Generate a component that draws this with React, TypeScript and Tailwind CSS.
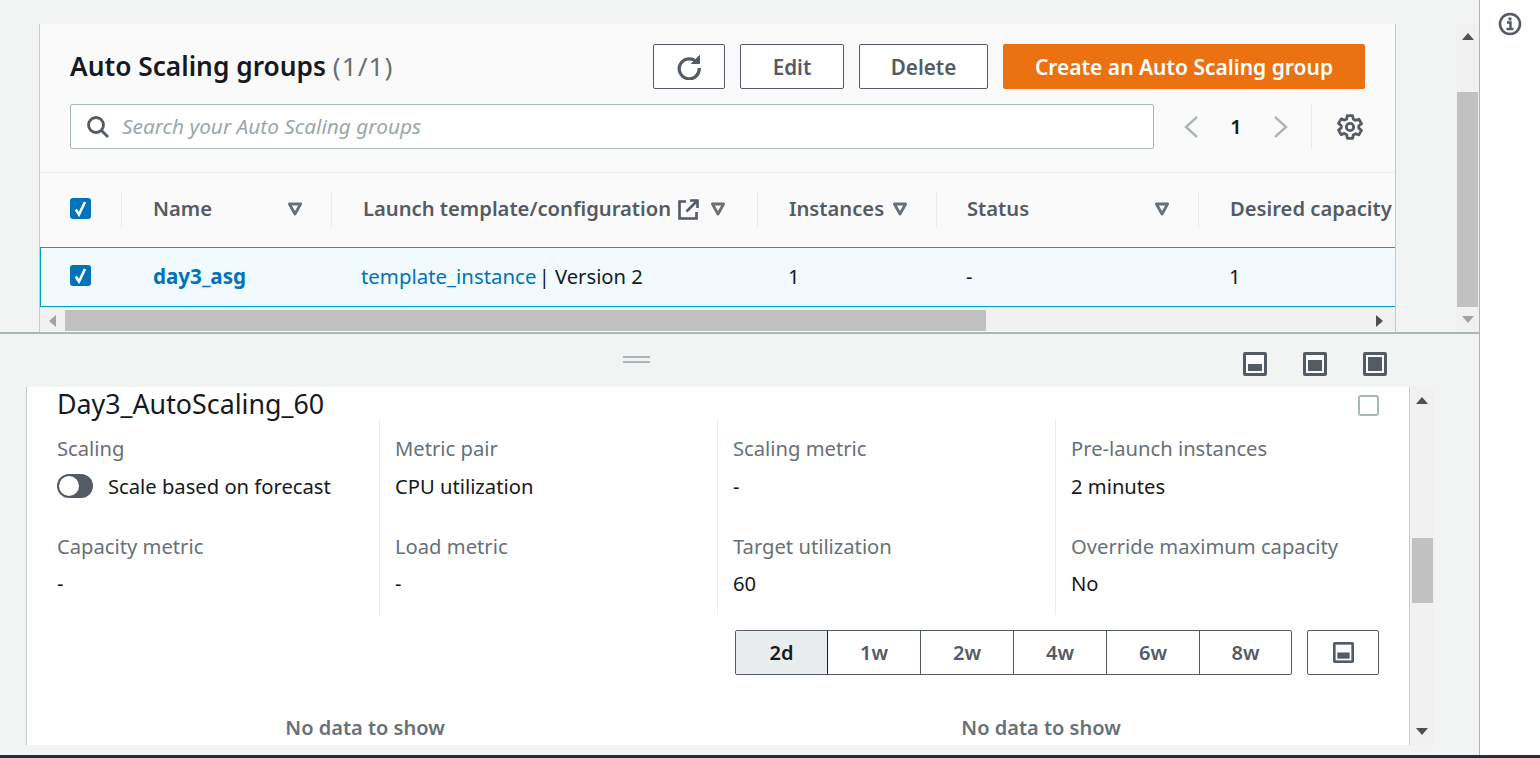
import React from "react";

const Tri = () => (
  <svg width="16" height="16" viewBox="0 0 16 16" fill="none" className="shrink-0">
    <path d="M2.4 3h11.2L8 13z" stroke="#687078" strokeWidth="2.8" strokeLinejoin="round" />
  </svg>
);

const Check = ({ className = "" }: { className?: string }) => (
  <span className={`flex h-[21px] w-[21px] shrink-0 items-center justify-center rounded-[3px] bg-[#0073bb] ${className}`}>
    <svg width="15" height="17" viewBox="0 0 15 17" fill="none">
      <path d="M2.8 9.5l3.2 5L12 2" stroke="#fff" strokeWidth="2.6" />
    </svg>
  </span>
);

const Panel = ({ fill, size = 24 }: { fill: "low" | "mid" | "full"; size?: number }) => (
  <svg width={size} height={size} viewBox="0 0 24 24" className="shrink-0">
    <rect x="0" y="0" width="24" height="24" rx="2" fill="#545b64" />
    <rect x="3" y="3" width="18" height="18" fill="#fafafa" />
    {fill === "low" && <rect x="5" y="12" width="14" height="7" fill="#545b64" />}
    {fill === "mid" && <rect x="5" y="8" width="14" height="11" fill="#545b64" />}
    {fill === "full" && <rect x="5" y="5" width="14" height="14" fill="#545b64" />}
  </svg>
);

const Up = ({ c = "#505050" }: { c?: string }) => (
  <svg width="12" height="7" viewBox="0 0 12 7"><path d="M6 0l6 7H0z" fill={c} /></svg>
);
const Down = ({ c = "#505050" }: { c?: string }) => (
  <svg width="12" height="7" viewBox="0 0 12 7"><path d="M0 0h12L6 7z" fill={c} /></svg>
);

const Field = ({ label, children, second }: { label: string; children: React.ReactNode; second?: boolean }) => (
  <div className="h-[98px]">
    <div className={`h-[28px] text-[20.2px] leading-[28px] text-[#687078] ${second ? "" : "-mt-[1px]"}`}>{label}</div>
    <div className={`flex h-[28px] items-center text-[20.2px] leading-[28px] text-[#16191f] ${second ? "mt-[9px]" : "mt-[10px]"}`}>{children}</div>
  </div>
);

const HeaderCell = ({ label, gap, ext, pad = "pl-[31px]" }: { label: string; gap: string; ext?: boolean; pad?: string }) => (
  <div className={`flex h-[36px] items-center border-l border-[#eaeded] ${pad}`}>
    <span className="-mt-[4px] whitespace-nowrap text-[20.2px] font-semibold leading-[28px] text-[#545b64]">{label}</span>
    {ext && (
      <svg width="22" height="22" viewBox="0 0 22 22" fill="none" className="-mt-[1px] ml-[6px] shrink-0">
        <path d="M9 2.5H2.5v17h17V13" stroke="#545b64" strokeWidth="2.6" />
        <path d="M13 1.5h7.5V9M20 2L9.5 12.5" stroke="#545b64" strokeWidth="2.6" />
      </svg>
    )}
    <span className={gap}><Tri /></span>
  </div>
);

const columns = "grid grid-cols-[81px_210px_426px_179px_262px_197px]";
const rowColumns = "grid grid-cols-[80px_210px_426px_179px_262px_197px]";

export default function App() {
  return (
    <div className="flex h-[758px] w-[1540px] flex-col overflow-hidden bg-white font-['Noto_Sans',sans-serif]">
      <div className="flex h-[755px] min-h-0">
        <main className="flex w-[1480px] shrink-0 flex-col border-r border-[#aab7b8] bg-[#f2f3f3]">
          {/* top pane */}
          <section className="flex h-[334px] shrink-0 border-b-2 border-[#aab7b8] pt-[24px]">
            <div className="ml-[39px] flex h-[308px] w-[1357px] shrink-0 flex-col overflow-hidden border-x border-[#c4cccd] bg-[#fafafa]">
              <div className="h-[149px] shrink-0 border-b border-[#eaeded] pl-[30px] pt-[20px]">
                <div className="flex h-[45px] items-center">
                  <h1 className="-mt-[2px] w-[583px] shrink-0 whitespace-nowrap text-[26.3px] font-semibold leading-[30px] text-[#16191f]">
                    Auto Scaling groups <span className="font-normal tracking-[1px] text-[#687078]">(1/1)</span>
                  </h1>
                  <button className="flex h-[45px] w-[72px] items-center justify-center rounded-[2px] border border-[#545b64] bg-white">
                    <svg width="26" height="26" viewBox="0 0 26 26" fill="none">
                      <path d="M21 8.5A10 10 0 1 0 23.2 14" stroke="#545b64" strokeWidth="3.2" />
                      <path d="M15.5 9.5h8V1.5z" fill="#545b64" stroke="#545b64" strokeWidth="1" />
                    </svg>
                  </button>
                  <button className="ml-[15px] h-[45px] w-[104px] rounded-[2px] border border-[#545b64] bg-white pt-[2px] text-[20.6px] font-semibold text-[#545b64]">Edit</button>
                  <button className="ml-[15px] h-[45px] w-[129px] rounded-[2px] border border-[#545b64] bg-white pt-[2px] text-[20.6px] font-semibold text-[#545b64]">Delete</button>
                  <button className="ml-[15px] h-[45px] w-[362px] rounded-[2px] bg-[#ec7211] pt-[2px] text-[21px] font-semibold text-white">Create an Auto Scaling group</button>
                </div>
                <div className="mt-[15px] flex h-[45px] items-center">
                  <div className="flex h-[45px] w-[1084px] shrink-0 items-center rounded-[2px] border border-[#aab7b8] bg-white pl-[15px]">
                    <svg width="24" height="24" viewBox="0 0 24 24" fill="none" className="shrink-0">
                      <circle cx="10" cy="10" r="7.5" stroke="#545b64" strokeWidth="2.8" />
                      <path d="M15.5 15.5L22 22" stroke="#545b64" strokeWidth="2.8" />
                    </svg>
                    <span className="ml-[12px] text-[20.8px] italic text-[#9ba7a8]">Search your Auto Scaling groups</span>
                  </div>
                  <svg width="16" height="24" viewBox="0 0 16 24" fill="none" className="ml-[29px] shrink-0">
                    <path d="M14 2L3 12l11 10" stroke="#aab7b8" strokeWidth="2.4" />
                  </svg>
                  <span className="ml-[30px] w-[14px] text-center text-[20px] font-semibold text-[#16191f]">1</span>
                  <svg width="16" height="24" viewBox="0 0 16 24" fill="none" className="ml-[30px] shrink-0">
                    <path d="M2 2l11 10L2 22" stroke="#aab7b8" strokeWidth="2.4" />
                  </svg>
                  <div className="ml-[22px] h-[45px] border-l border-[#eaeded]" />
                  <svg width="26" height="26" viewBox="0 0 24 24" fill="none" stroke="#545b64" strokeWidth="2.6" strokeLinejoin="round" className="ml-[25px] shrink-0">
                    <path d="M9.6 1.5h4.8l.6 3.2 2.2 1.2 3-1.1 2.4 4.2-2.5 2v2.1l2.5 2-2.4 4.2-3-1.1-2.2 1.2-.6 3.1H9.6L9 19.1l-2.2-1.2-3 1.1-2.4-4.2 2.5-2v-2.1L1.4 8.7l2.4-4.2 3 1.1L9 4.7z" />
                    <circle cx="12" cy="12" r="3.4" />
                  </svg>
                </div>
              </div>
              <div className={`${columns} h-[74px] shrink-0 items-center`}>
                <div className="pl-[30px]"><Check className="-mt-[3px]" /></div>
                <HeaderCell label="Name" gap="ml-auto mr-[28px] -mt-[2px]" />
                <HeaderCell label="Launch template/configuration" gap="ml-[11px] -mt-[2px]" ext />
                <HeaderCell label="Instances" gap="ml-[8px] -mt-[2px]" />
                <HeaderCell label="Status" gap="ml-auto mr-[28px] -mt-[2px]" pad="pl-[30px]" />
                <div className="overflow-hidden">
                  <HeaderCell label="Desired capacity" gap="ml-[10px] -mt-[2px]" />
                </div>
              </div>
              <div className={`${rowColumns} h-[60px] shrink-0 items-center border-y border-l border-[#00a1c9] bg-[#f1faff] pb-[2px] text-[20.2px] leading-[28px] text-[#16191f]`}>
                <div className="pl-[29px]"><Check className="-mt-[1px]" /></div>
                <div className="pl-[32px] text-[20.6px] font-bold text-[#0073bb]">day3_asg</div>
                <div className="whitespace-nowrap pl-[30px]"><span className="mr-[-3px] text-[20.4px] text-[#0073bb]">template_instance</span> | Version 2</div>
                <div className="pl-[31px]">1</div>
                <div className="pl-[30px]">-</div>
                <div className="pl-[31px]">1</div>
              </div>
              <div className="flex h-[24px] shrink-0 items-end bg-[#f1f1f1]">
                <div className="flex h-[21px] w-[25px] items-center justify-center">
                  <svg width="7" height="12" viewBox="0 0 7 12"><path d="M7 0v12L0 6z" fill="#a3a3a3" /></svg>
                </div>
                <div className="h-[21px] w-[921px] bg-[#c1c1c1]" />
                <div className="flex h-[21px] flex-1 items-center justify-end pr-[12px]">
                  <svg width="7" height="12" viewBox="0 0 7 12"><path d="M0 0v12l7-6z" fill="#505050" /></svg>
                </div>
              </div>
            </div>
            <div className="ml-auto flex h-[308px] w-[23px] shrink-0 flex-col items-center bg-[#f1f1f1]">
              <div className="flex h-[68px] w-full justify-center pt-[9px]"><Up /></div>
              <div className="h-[215px] w-[21px] bg-[#c1c1c1]" />
              <div className="flex flex-1 items-center justify-center"><Down c="#a3a3a3" /></div>
            </div>
          </section>

          {/* drawer bar */}
          <div className="flex h-[53px] shrink-0 items-center pt-[6px]">
            <div className="mb-[8px] ml-[623px] flex w-[27px] flex-col gap-[3px]">
              <div className="h-[2px] bg-[#aab7b8]" />
              <div className="h-[2px] bg-[#aab7b8]" />
            </div>
            <div className="ml-[593px] flex gap-[36px]">
              <Panel fill="low" />
              <Panel fill="mid" />
              <Panel fill="full" />
            </div>
          </div>

          {/* bottom pane */}
          <section className="flex h-[358px] shrink-0">
            <div className="ml-[26px] flex h-[358px] w-[1384px] shrink-0 flex-col border-x border-[#c4cccd] bg-white">
              <div className="flex h-[33px] shrink-0 items-center justify-between pl-[30px] pr-[30px]">
                <h2 className="whitespace-nowrap text-[26.8px] leading-[33px] text-[#16191f]">Day3_AutoScaling_60</h2>
                <span className="mt-[3px] h-[21px] w-[21px] rounded-[3px] border-2 border-[#aab7b8] bg-white" />
              </div>
              <div className="grid h-[195px] shrink-0 grid-cols-[353px_338px_338px_338px] grid-rows-[195px]">
                <div className="border-r border-[#eaeded] pl-[30px] pt-[15px]">
                  <Field label="Scaling">
                    <span className="relative h-[24px] w-[36px] shrink-0 rounded-full bg-[#545b64]">
                      <span className="absolute left-[2px] top-[2px] h-[20px] w-[20px] rounded-full bg-white" />
                    </span>
                    <span className="ml-[15px] whitespace-nowrap">Scale based on forecast</span>
                  </Field>
                  <Field label="Capacity metric" second>-</Field>
                </div>
                <div className="border-r border-[#eaeded] pl-[15px] pt-[15px]">
                  <Field label="Metric pair">CPU utilization</Field>
                  <Field label="Load metric" second>-</Field>
                </div>
                <div className="border-r border-[#eaeded] pl-[15px] pt-[15px]">
                  <Field label="Scaling metric">-</Field>
                  <Field label="Target utilization" second>60</Field>
                </div>
                <div className="pl-[15px] pt-[15px]">
                  <Field label="Pre-launch instances">2 minutes</Field>
                  <Field label="Override maximum capacity" second>No</Field>
                </div>
              </div>
              <div className="mt-[15px] flex h-[45px] shrink-0">
                <div className="ml-[708px] flex h-[45px] w-[557px] overflow-hidden rounded-[2px] border border-[#545b64] text-[20px] font-semibold text-[#545b64]">
                  <div className="flex w-[92px] items-center justify-center border-r border-[#16191f] bg-[#eaeded] text-[#16191f]">2d</div>
                  {["1w", "2w", "4w", "6w"].map((t) => (
                    <div key={t} className="flex w-[93px] items-center justify-center border-r border-[#545b64]">{t}</div>
                  ))}
                  <div className="flex flex-1 items-center justify-center">8w</div>
                </div>
                <div className="ml-[15px] flex h-[45px] w-[72px] items-center justify-center rounded-[2px] border border-[#545b64]">
                  <Panel fill="low" size={21} />
                </div>
              </div>
              <div className="mt-[39px] grid grid-cols-[676px_676px] text-center text-[20px] font-semibold leading-[28px] text-[#687078]">
                <div>No data to show</div>
                <div>No data to show</div>
              </div>
            </div>
            <div className="flex h-[358px] w-[24px] shrink-0 flex-col items-center bg-[#f1f1f1]">
              <div className="flex h-[151px] w-full justify-center pt-[10px]"><Up /></div>
              <div className="h-[65px] w-[21px] bg-[#c1c1c1]" />
              <div className="flex flex-1 items-end justify-center pb-[10px]"><Down /></div>
            </div>
          </section>
        </main>
        <aside className="flex flex-1 justify-center bg-white pt-[12px]">
          <svg width="24" height="24" viewBox="0 0 24 24" fill="none" className="mr-[1px]">
            <circle cx="12" cy="12" r="10" stroke="#545b64" strokeWidth="2.6" />
            <path d="M9 10.5h3.5V17M8.5 17h7" stroke="#545b64" strokeWidth="2.4" />
            <rect x="10.5" y="5.5" width="3" height="3" fill="#545b64" />
          </svg>
        </aside>
      </div>
      <div className="h-[3px] shrink-0 bg-[#232f3e]" />
    </div>
  );
}
